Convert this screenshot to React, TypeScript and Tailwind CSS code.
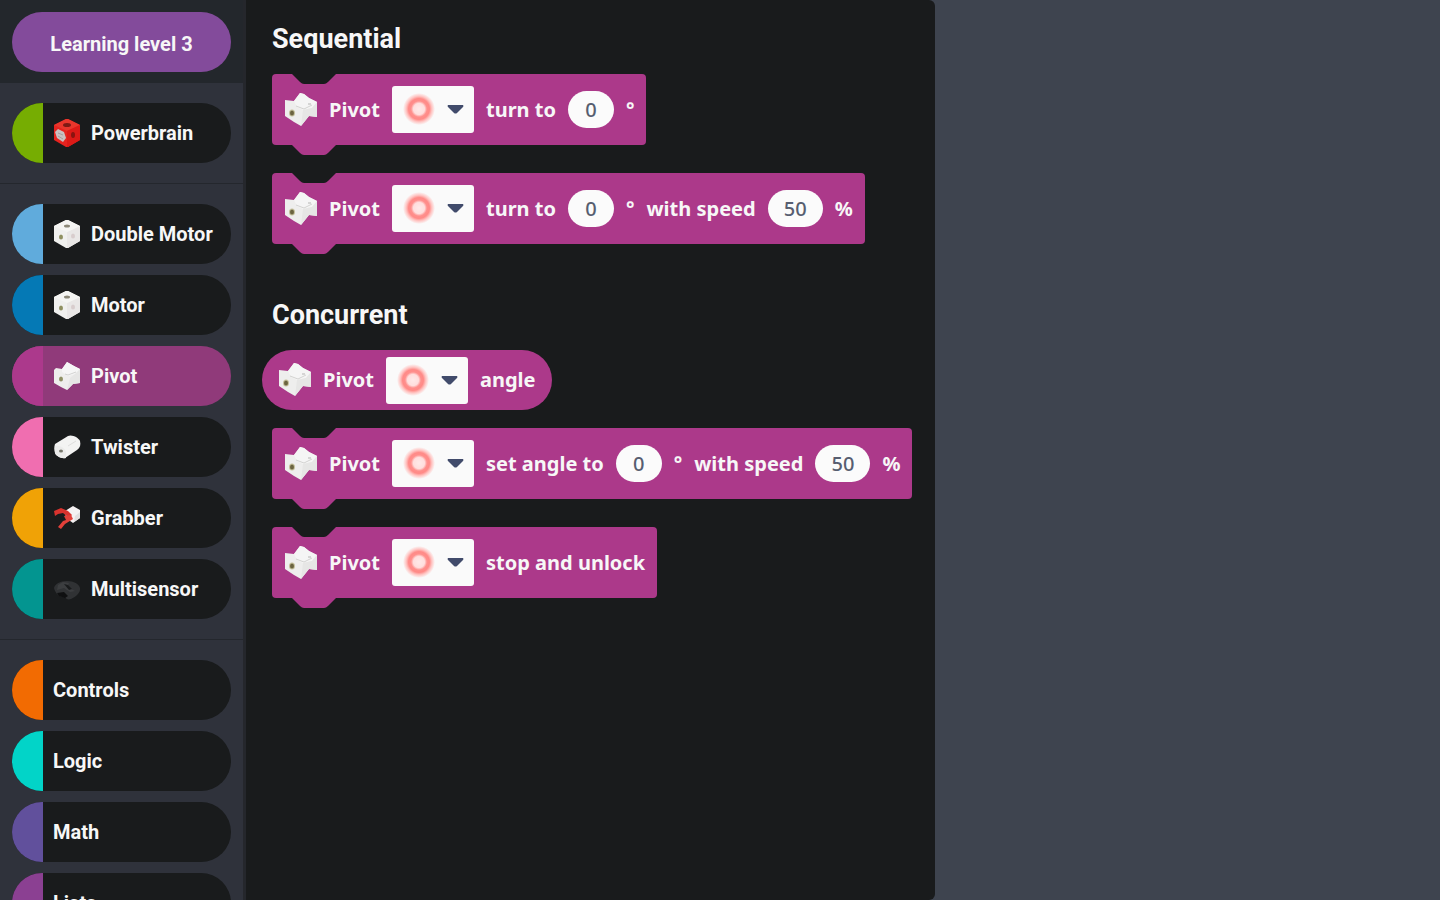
import { useState } from "react";
import type { ReactNode } from "react";

type IconName = "powerbrain" | "cube" | "pivot" | "twister" | "grabber" | "multisensor";

interface Category {
  name: string;
  color: string;
  icon?: IconName;
}

const groups: Category[][] = [
  [{ name: "Powerbrain", color: "bg-[#76ad02]", icon: "powerbrain" }],
  [
    { name: "Double Motor", color: "bg-[#60abdc]", icon: "cube" },
    { name: "Motor", color: "bg-[#0579b5]", icon: "cube" },
    { name: "Pivot", color: "bg-[#ac398c]", icon: "pivot" },
    { name: "Twister", color: "bg-[#f06eb0]", icon: "twister" },
    { name: "Grabber", color: "bg-[#f0a206]", icon: "grabber" },
    { name: "Multisensor", color: "bg-[#039590]", icon: "multisensor" },
  ],
  [
    { name: "Controls", color: "bg-[#f26b02]" },
    { name: "Logic", color: "bg-[#02d4c8]" },
    { name: "Math", color: "bg-[#61509c]" },
    { name: "Lists", color: "bg-[#8b4092]" },
  ],
];

function ModuleIcon({ name }: { name: IconName }) {
  switch (name) {
    case "powerbrain":
      return (
        <svg viewBox="0 0 28 30" className="h-[30px] w-7 shrink-0" aria-hidden="true">
          <path d="M13 1h2l12 6v15l-12 7h-2L1 22V7z" fill="#e5231f" />
          <path d="M13 1h2l12 6-13 6L1 7z" fill="#e8362c" />
          <path d="M14 13 27 7v15l-12 7h-1z" fill="#dc1a17" />
          <ellipse cx="14" cy="7" rx="4" ry="2" fill="#7c1a14" />
          <ellipse cx="20" cy="17" rx="2" ry="3" fill="#8a1410" />
          <path d="m2 14 3-3 6 3 2 6-3 4-6-4z" fill="#c9bfc0" />
          <path d="m5 15 5 2m-5 1 5 3" stroke="#a39da0" strokeWidth="1" />
        </svg>
      );
    case "cube":
      return (
        <svg viewBox="0 0 28 30" className="h-[30px] w-7 shrink-0" aria-hidden="true">
          <path d="M13 1h2l12 6v15l-12 7h-2L1 22V7z" fill="#f0f0ee" />
          <path d="M14 13 27 7v15l-12 7h-1z" fill="#e9e7e6" />
          <path d="M13 1h2l12 6-13 6L1 7z" fill="#f5f5f3" />
          <ellipse cx="14" cy="7" rx="3" ry="1.5" fill="#8c8878" />
          <ellipse cx="8" cy="18" rx="2" ry="2.5" fill="#8f9061" />
          <ellipse cx="20" cy="17" rx="2" ry="2.5" fill="#d8cdcd" />
        </svg>
      );
    case "pivot":
      return (
        <svg viewBox="0 0 28 30" className="h-[30px] w-7 shrink-0" aria-hidden="true">
          <path d="M1 9 3 7l6 1 5-7 7 4 6 3v14l-7 1-6 6-6-3-7-4z" fill="#eeeeed" />
          <path d="m9 8 5-7 7 4 6 3-5 5-7 2-6-4z" fill="#f6f6f6" />
          <path d="m22 13 5-5v14l-7 1-6 6 3-12z" fill="#e6e6e5" />
          <path d="m12 13 3 1 8-3" stroke="#d3d3d2" strokeWidth="1" fill="none" />
          <ellipse cx="8" cy="18" rx="2" ry="2.5" fill="#8f9065" />
        </svg>
      );
    case "twister":
      return (
        <svg viewBox="0 0 28 30" className="h-[30px] w-7 shrink-0" aria-hidden="true">
          <path d="M2 12 15 4c4-2 11 2 12 5 1 4 0 7-3 9l-12 8c-4 1-9-2-10-5-1-3-1-6 0-9z" fill="#f3f3f2" />
          <path d="M2 14c4-1 10 2 11 6v6c-4 1-10-2-11-5z" fill="#ebebea" />
          <ellipse cx="8" cy="19" rx="2" ry="1.500" fill="#77776c" />
          <path d="m15 14 8-5" stroke="#dededd" strokeWidth="1" />
        </svg>
      );
    case "grabber":
      return (
        <svg viewBox="0 0 28 30" className="h-[30px] w-7 shrink-0" aria-hidden="true">
          <path d="m12 8 8-5 7 4v8l-7 5-7-5z" fill="#f4f1f1" />
          <path d="m22 13 5-4v6l-6 4z" fill="#e2dfdf" />
          <path d="M2 13 1 8l7-3 7 3 4 4-3 3-6-5-5 1z" fill="#d9332e" />
          <path d="m11 13 7-1 2 4-8 5-4 5-3-2 5-6 3-1z" fill="#e24039" />
        </svg>
      );
    case "multisensor":
      return (
        <svg viewBox="0 0 28 30" className="h-[30px] w-7 shrink-0" aria-hidden="true">
          <path d="M1 14c1-4 6-7 13-7s12 3 13 7-4 9-9 11c-3 1-5 0-6-2-5 1-10-4-11-9z" fill="#303234" />
          <path d="m5 11 5-3 6 1-2 4 8 4-5 1-6-4-7 2z" fill="#3c3e40" />
          <path d="m4 19 7-1 4 4-3 2-6-2z" fill="#0f1011" />
          <path d="m11 10 4 1 4 4-3 1z" fill="#191b1c" />
        </svg>
      );
  }
}

//big module drawing at the start of every block
function BlockIcon() {
  return (
    <svg viewBox="0 0 35 36" className="h-9 w-[35px] shrink-0" aria-hidden="true">
      <path d="m1 8 9 1 6-8 4 1 5 4 8 4v15l-8-1-8 10-7-4-9-6z" fill="#eeeeed" />
      <path d="m10 9 6-8 4 1 5 4 8 4-5 6-9 2-6-3z" fill="#f5f5f5" />
      <path d="m19 18 9-2 5-6v15l-8-1-8 10z" fill="#e6e6e5" />
      <path d="m12 14 8 3 8-4" stroke="#d3d3d1" strokeWidth="1" fill="none" />
      <path d="M24 12h3" stroke="#b5b5b3" strokeWidth="1" />
      <ellipse cx="8" cy="21" rx="3" ry="3.5" fill="#c4c09c" />
      <ellipse cx="8" cy="21" rx="2" ry="2.5" fill="#6b6440" />
    </svg>
  );
}

function ColorSelect({ label }: { label: string }) {
  return (
    <span className="relative flex shrink-0">
      <select
        aria-label={label}
        className="h-[47px] w-[82px] cursor-pointer appearance-none rounded-[3px] bg-[#fafafa]"
      >
        <option value="red" aria-label="red" />
      </select>
      <svg viewBox="0 0 82 47" className="pointer-events-none absolute inset-0 h-full w-full" aria-hidden="true">
        <defs>
          <radialGradient id="glow">
            <stop offset="0" stopColor="#ffe9e8" />
            <stop offset="0.35" stopColor="#ffdedd" />
            <stop offset="0.5" stopColor="#ff8f8c" />
            <stop offset="0.65" stopColor="#ff8a87" />
            <stop offset="0.8" stopColor="#ffc4c2" />
            <stop offset="1" stopColor="#fafafa" />
          </radialGradient>
        </defs>
        <circle cx="27" cy="23" r="16" fill="url(#glow)" />
        <path d="M56 19h15q1 1 0 2l-6 6q-1.500 1-3 0l-6-6q-1-1 0-2z" fill="#414b6b" />
      </svg>
    </span>
  );
}

function NumberField({ value, label, wide = false }: { value: string; label: string; wide?: boolean }) {
  return (
    <input
      type="text"
      aria-label={label}
      defaultValue={value}
      className={
        wide
          ? "h-[37px] w-[55px] shrink-0 rounded-full bg-[#fbfbfb] text-center font-medium text-[#575e70]"
          : "h-[37px] w-[46px] shrink-0 rounded-full bg-[#fbfbfb] text-center font-medium text-[#575e70]"
      }
    />
  );
}

function BlockHead() {
  return (
    <>
      <span className="flex items-center gap-[10px]">
        <BlockIcon />
        Pivot
      </span>
      <ColorSelect label="Pivot color" />
    </>
  );
}

//stack block, with the notch on top and the tab below
function StackBlock({ children }: { children?: ReactNode }) {
  return (
    <div className="relative flex h-[71px] w-fit items-center gap-3 rounded bg-[#ac398a] px-3 whitespace-nowrap">
      <svg viewBox="0 0 46 10" className="absolute top-0 left-5 h-[10px] w-[46px]" aria-hidden="true">
        <path d="M0 0 8 8q2 2 4 2h20q2 0 4-2l8-8z" fill="#191b1c" />
      </svg>
      <svg viewBox="0 0 46 10" className="absolute top-full left-5 h-[10px] w-[46px]" aria-hidden="true">
        <path d="M0 0 8 8q2 2 4 2h20q2 0 4-2l8-8z" fill="#ac398a" />
      </svg>
      <BlockHead />
      {children}
    </div>
  );
}

function ValueBlock({ children }: { children?: ReactNode }) {
  return (
    <div className="-ml-[10px] flex h-[60px] w-fit items-center gap-3 rounded-full bg-[#ac398a] px-4 whitespace-nowrap">
      <BlockHead />
      {children}
    </div>
  );
}

export default function App() {
  const [selected, setSelected] = useState("Pivot");

  return (
    <div className="flex h-screen overflow-hidden bg-[#3e444f] font-['Roboto',sans-serif] text-[#f7f7f7]">
      <aside className="flex w-[246px] shrink-0 flex-col overflow-hidden border-r-[3px] border-[#25272c] bg-[#2f323b] text-xl font-bold">
        <div className="bg-[#23272c] px-3 pt-3 pb-[11px]">
          <button className="h-[60px] w-full cursor-pointer rounded-full bg-[#834b9b] pt-1">Learning level 3</button>
        </div>
        <nav>
          {groups.map((group, i) => (
            <ul key={i} className="flex flex-col gap-[11px] border-b border-[#24272d] px-3 py-5">
              {group.map((item) => (
                <li key={item.name}>
                  <button
                    onClick={() => setSelected(item.name)}
                    className={
                      selected === item.name
                        ? "flex h-[60px] w-full cursor-pointer items-center overflow-hidden rounded-full bg-[#903a7a]"
                        : "flex h-[60px] w-full cursor-pointer items-center overflow-hidden rounded-full bg-[#191b1c]"
                    }
                  >
                    <span className={`h-full w-[31px] ${item.color}`} />
                    <span className="flex items-center gap-[10px] pl-[10px] whitespace-nowrap">
                      {item.icon && <ModuleIcon name={item.icon} />}
                      {item.name}
                    </span>
                  </button>
                </li>
              ))}
            </ul>
          ))}
        </nav>
      </aside>

      <main className="w-[689px] shrink-0 rounded-r-md bg-[#191b1c] pt-[23px] pl-[26px] font-['Noto_Sans',sans-serif] text-xl font-bold">
        <section>
          <h2 className="mb-[19px] font-['Roboto',sans-serif] text-[27px] leading-8">Sequential</h2>
          <div className="flex flex-col gap-7">
            <StackBlock>
              <span>turn to</span>
              <NumberField value="0" label="Angle" />
              <span>°</span>
            </StackBlock>
            <StackBlock>
              <span>turn to</span>
              <NumberField value="0" label="Angle" />
              <span>°</span>
              <span>with speed</span>
              <NumberField value="50" label="Speed" wide />
              <span>%</span>
            </StackBlock>
          </div>
        </section>
        <section className="mt-[55px]">
          <h2 className="mb-[19px] font-['Roboto',sans-serif] text-[27px] leading-8">Concurrent</h2>
          <ValueBlock>
            <span>angle</span>
          </ValueBlock>
          <div className="mt-[18px] flex flex-col gap-7">
            <StackBlock>
              <span>set angle to</span>
              <NumberField value="0" label="Angle" />
              <span>°</span>
              <span>with speed</span>
              <NumberField value="50" label="Speed" wide />
              <span>%</span>
            </StackBlock>
            <StackBlock>
              <span>stop and unlock</span>
            </StackBlock>
          </div>
        </section>
      </main>
    </div>
  );
}
